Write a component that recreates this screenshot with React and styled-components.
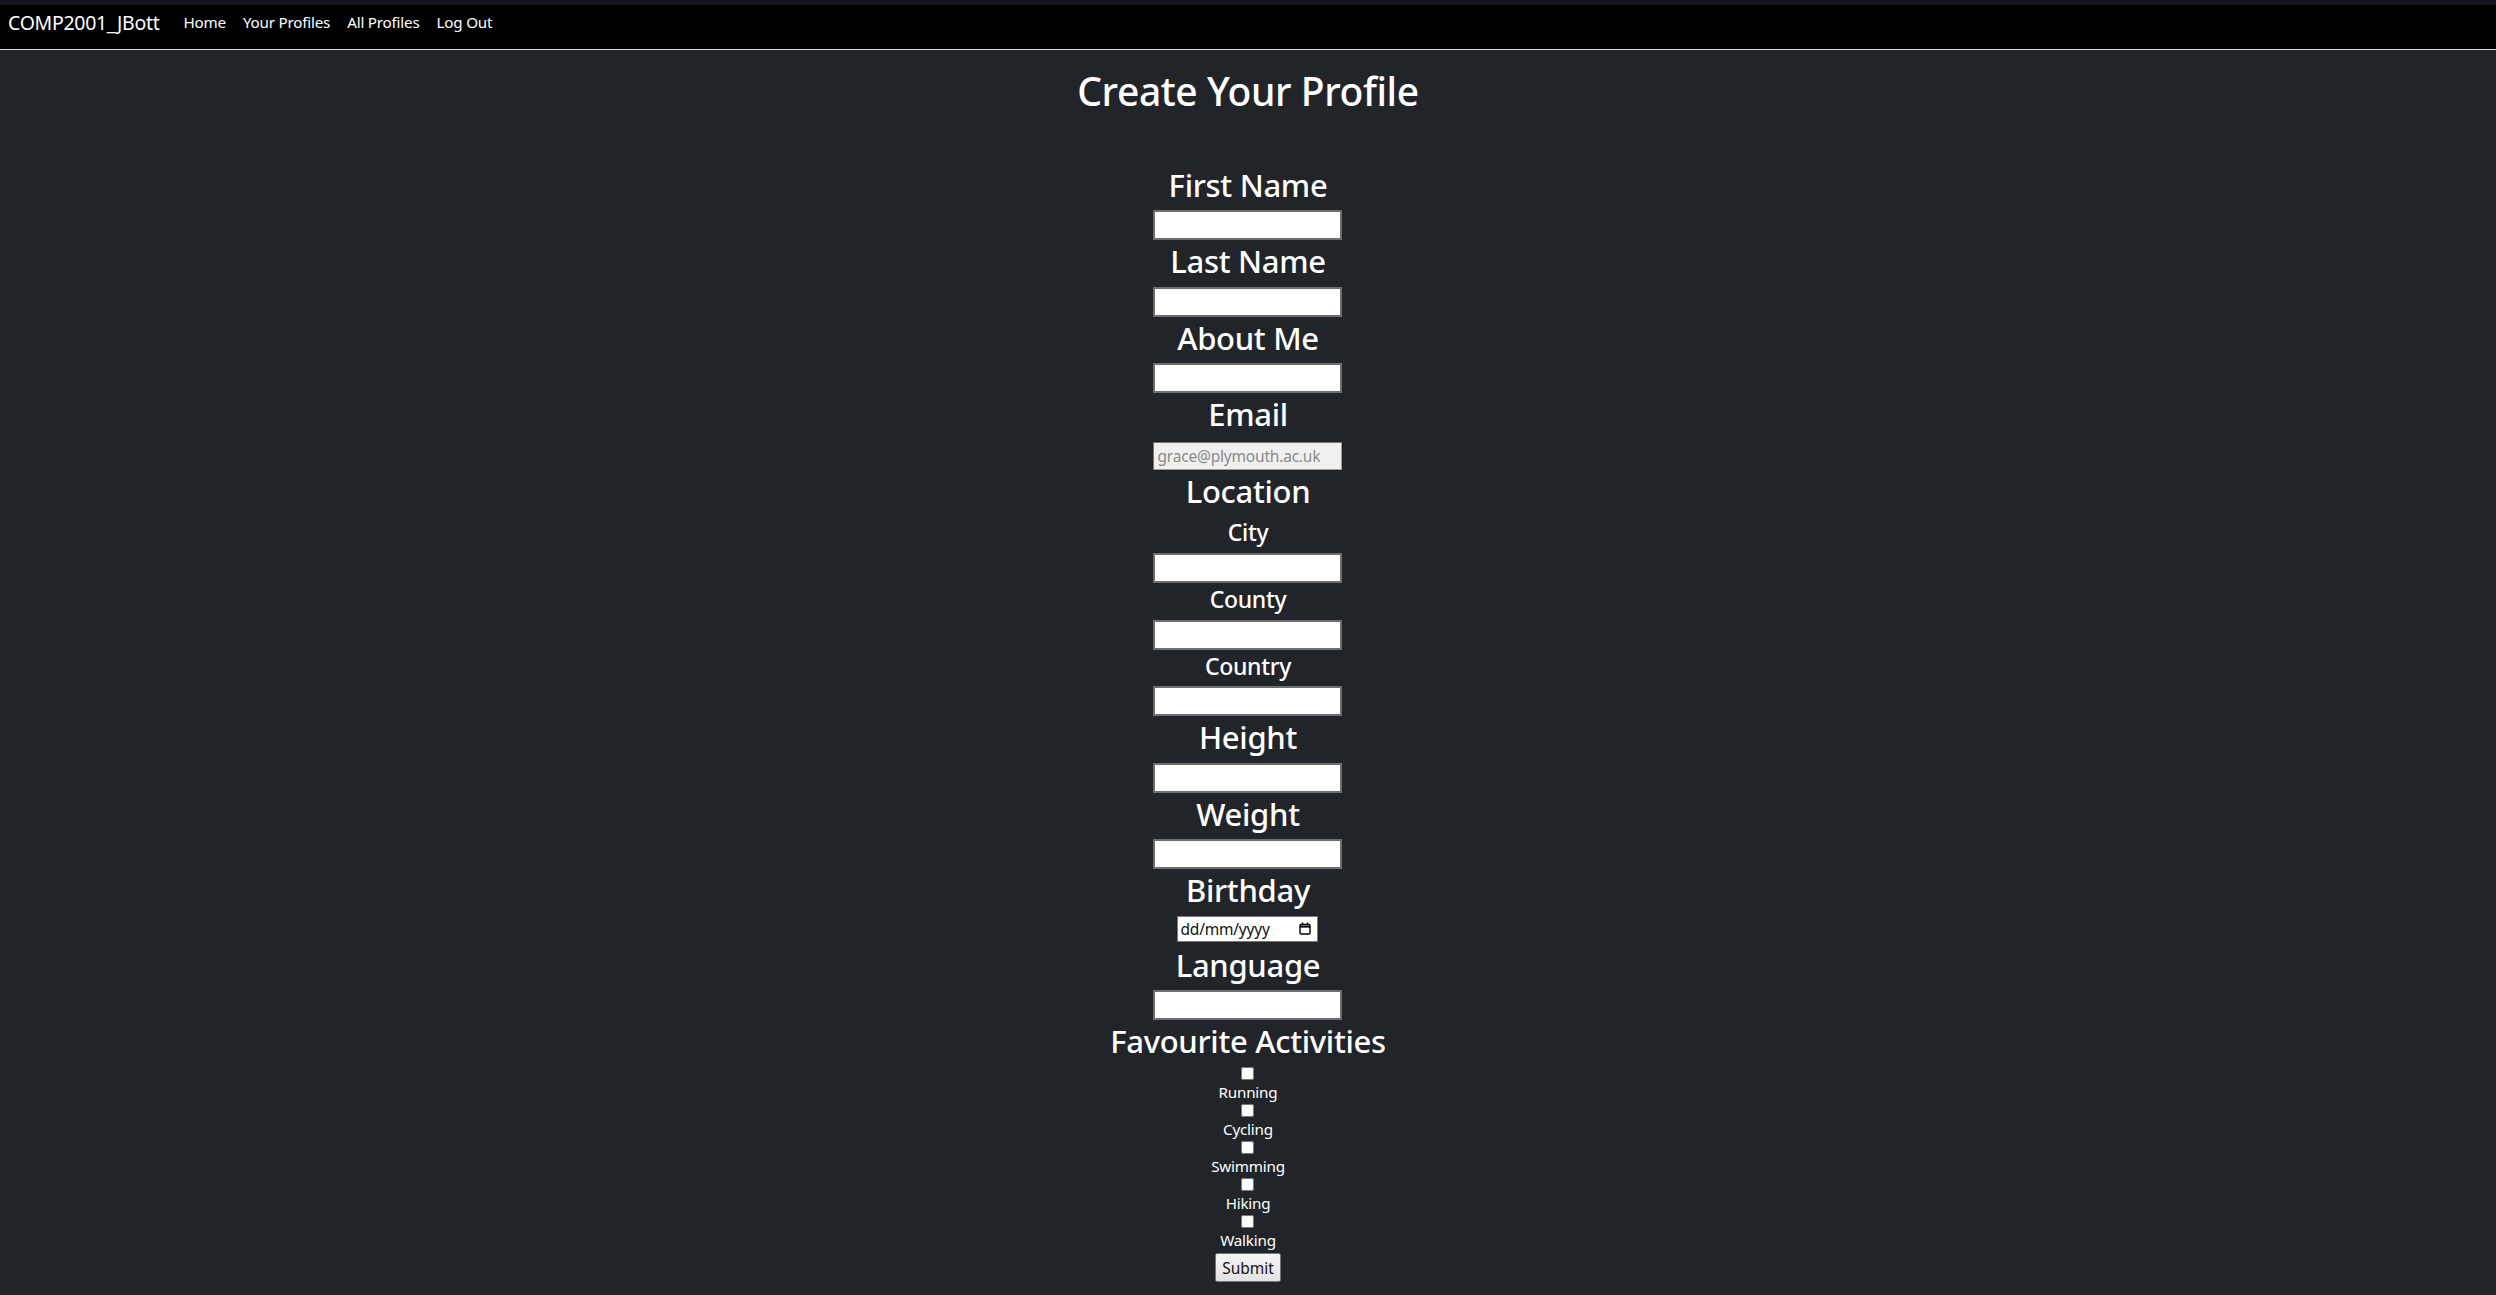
import React from 'react';
import styled, { createGlobalStyle } from 'styled-components';

const GlobalStyle = createGlobalStyle`
  html, body {
    margin: 0;
    background: #212529;
    color: #fff;
    font-family: 'Noto Sans', 'Open Sans', sans-serif;
  }
`;

const TopStrip = styled.div`
  height: 5px;
  background: #14141d;
`;

const Nav = styled.nav`
  display: flex;
  align-items: center;
  gap: 24px;
  height: 30px;
  padding: 2px 8px 12px;
  background: #000;
  border-bottom: 1px solid #d8d8d8;
`;

const Brand = styled.a`
  color: #fff;
  font-size: 19.5px;
  letter-spacing: -0.3px;
  text-decoration: none;
`;

const Links = styled.div`
  display: flex;
  gap: 17px;
`;

const NavLink = styled.a`
  color: #fff;
  font-size: 15.2px;
  letter-spacing: -0.2px;
  text-decoration: none;
`;

const Main = styled.main`
  display: flex;
  flex-direction: column;
  align-items: center;
  text-align: center;
`;

const Title = styled.h1`
  margin: 17px 0 49px;
  font-size: 39px;
  font-weight: 500;
  line-height: 48px;
  letter-spacing: -0.4px;
`;

const Form = styled.form`
  display: flex;
  flex-direction: column;
  align-items: center;
`;

const Label = styled.h2`
  margin: 0 0 6px;
  padding-top: 2px;
  font-size: ${({ $small }) => ($small ? '23px' : '31px')};
  font-weight: 500;
  line-height: ${({ $small }) => ($small ? '28.8px' : '38.4px')};
  letter-spacing: -0.3px;
`;

const TextInput = styled.input`
  box-sizing: border-box;
  width: 189px;
  height: 30px;
  margin: 0;
  border: 2px solid #6e6e6e;
  background: #fff;
  font-family: 'Noto Sans', sans-serif;
  font-size: 14px;

  &:read-only {
    height: 28px;
    margin-top: 2px;
    border: 1px solid #767676;
    border-right-color: #9a9a9a;
    border-bottom-color: #9a9a9a;
    background: #f0f0f0;
    color: #8a8a8a;
    padding: 0 3px;
    font-size: 15.5px;
    letter-spacing: -0.2px;
  }
`;

const DateBox = styled.label`
  box-sizing: border-box;
  display: flex;
  align-items: center;
  width: 141px;
  height: 26px;
  margin-bottom: 2px;
  padding: 0 6px 0 2px;
  border: 1px solid #767676;
  background: #fff;
`;

const DateInput = styled.input`
  flex: 1;
  min-width: 0;
  border: none;
  padding: 0;
  outline: none;
  background: transparent;
  font-family: 'Noto Sans', sans-serif;
  font-size: 15.5px;
  letter-spacing: -0.2px;

  &::placeholder {
    color: #111;
  }
`;

const Activities = styled.div`
  display: flex;
  flex-direction: column;
  align-items: center;
`;

const Activity = styled.label`
  display: flex;
  flex-direction: column;
  align-items: center;
  font-size: 15.2px;
  line-height: 18px;
  letter-spacing: -0.2px;
`;

const Check = styled.input`
  width: 13px;
  height: 13px;
  margin: ${({ $first }) => ($first ? '1px 0 3px' : '3px 0')};
`;

const Submit = styled.button`
  margin-top: 4px;
  height: 29px;
  padding: 0 6px;
  border: 1px solid #767676;
  border-radius: 2px;
  background: linear-gradient(#f5f5f5, #e2e2e2);
  color: #111;
  font-family: 'Noto Sans', sans-serif;
  font-size: 15.5px;
`;

const CalendarIcon = () => (
  <svg width="12" height="13" viewBox="0 0 12 13" fill="none" stroke="#000" strokeWidth="1.4">
    <rect x="1" y="2.5" width="10" height="9.5" rx="1" />
    <line x1="1" y1="4.6" x2="11" y2="4.6" strokeWidth="2" />
    <line x1="3.5" y1="0.5" x2="3.5" y2="3" />
    <line x1="8.5" y1="0.5" x2="8.5" y2="3" />
  </svg>
);

const fields = [
  { label: 'First Name' },
  { label: 'Last Name' },
  { label: 'About Me' },
  { label: 'Email', value: 'grace@plymouth.ac.uk', readOnly: true },
];

const locationFields = ['City', 'County', 'Country'];
const activities = ['Running', 'Cycling', 'Swimming', 'Hiking', 'Walking'];

const App = () => (
  <>
    <GlobalStyle />
    <TopStrip />
    <Nav>
      <Brand href="#">COMP2001_JBott</Brand>
      <Links>
        <NavLink href="#">Home</NavLink>
        <NavLink href="#">Your Profiles</NavLink>
        <NavLink href="#">All Profiles</NavLink>
        <NavLink href="#">Log Out</NavLink>
      </Links>
    </Nav>
    <Main>
      <Title>Create Your Profile</Title>
      <Form onSubmit={(e) => e.preventDefault()}>
        {fields.map((f) => (
          <React.Fragment key={f.label}>
            <Label>{f.label}</Label>
            <TextInput type="text" defaultValue={f.value} readOnly={f.readOnly} />
          </React.Fragment>
        ))}
        <Label>Location</Label>
        {locationFields.map((name) => (
          <React.Fragment key={name}>
            <Label $small>{name}</Label>
            <TextInput type="text" />
          </React.Fragment>
        ))}
        <Label>Height</Label>
        <TextInput type="text" />
        <Label>Weight</Label>
        <TextInput type="text" />
        <Label>Birthday</Label>
        <DateBox>
          <DateInput type="text" placeholder="dd/mm/yyyy" />
          <CalendarIcon />
        </DateBox>
        <Label>Language</Label>
        <TextInput type="text" />
        <Label>Favourite Activities</Label>
        <Activities>
          {activities.map((a, i) => (
            <Activity key={a}>
              <Check type="checkbox" $first={i === 0} />
              {a}
            </Activity>
          ))}
        </Activities>
        <Submit type="submit">Submit</Submit>
      </Form>
    </Main>
  </>
);

export default App;
